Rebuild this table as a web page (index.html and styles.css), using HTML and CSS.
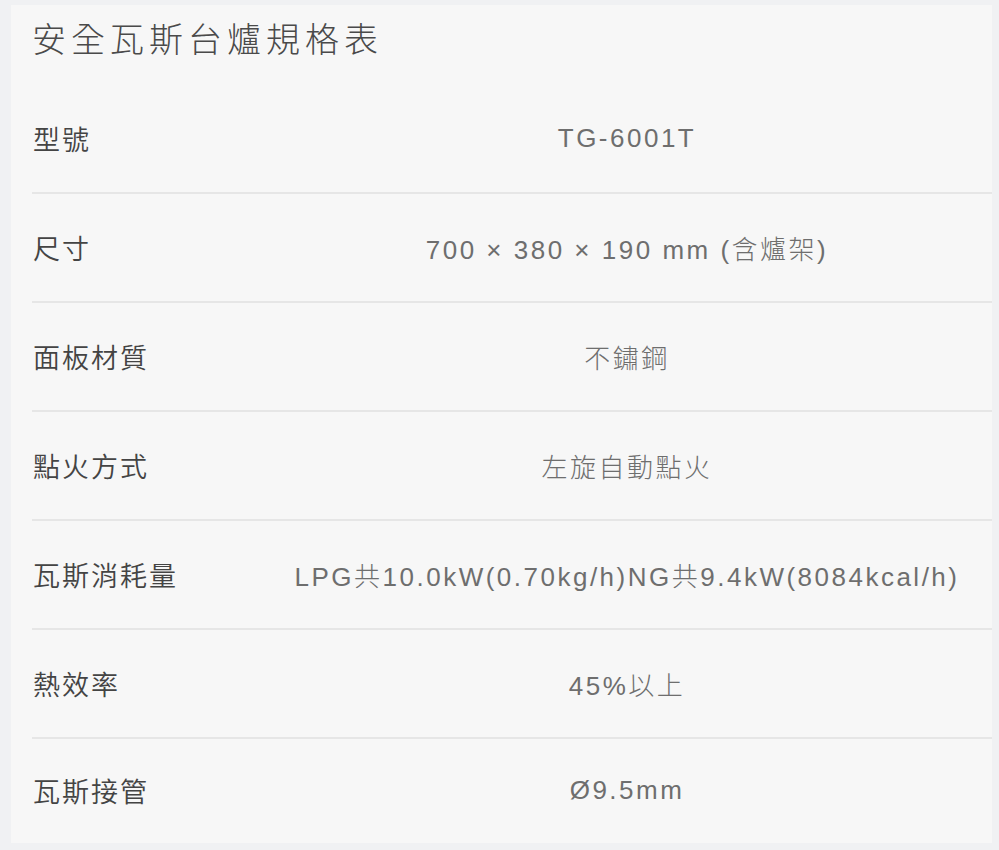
FILE: index.html
```html
<!DOCTYPE html>
<html lang="zh-Hant">
<head>
  <meta charset="UTF-8" />
  <meta name="viewport" content="width=device-width, initial-scale=1" />
  <title>安全瓦斯台爐規格表</title>
  <link rel="stylesheet" href="styles.css">
</head>
<body>
  <div class="spec-card">
    <h2 class="spec-title">安全瓦斯台爐規格表</h2>

    <!-- Tableau des specs -->
    <div class="spec-table">
      <div class="spec-row">
        <div class="spec-label">型號</div>
        <div class="spec-value">TG-6001T</div>
      </div>
      <div class="spec-row">
        <div class="spec-label">尺寸</div>
        <div class="spec-value">700 × 380 × 190 mm (含爐架)</div>
      </div>
      <div class="spec-row">
        <div class="spec-label">面板材質</div>
        <div class="spec-value">不鏽鋼</div>
      </div>
      <div class="spec-row">
        <div class="spec-label">點火方式</div>
        <div class="spec-value">左旋自動點火</div>
      </div>
      <div class="spec-row">
        <div class="spec-label">瓦斯消耗量</div>
        <div class="spec-value">LPG共10.0kW(0.70kg/h)NG共9.4kW(8084kcal/h)</div>
      </div>
      <div class="spec-row">
        <div class="spec-label">熱效率</div>
        <div class="spec-value">45%以上</div>
      </div>
      <div class="spec-row">
        <div class="spec-label">瓦斯接管</div>
        <div class="spec-value">Ø9.5mm</div>
      </div>
    </div>
  </div>
</body>
</html>
```

FILE: styles.css
```css
* {
  margin: 0;
  padding: 0;
  box-sizing: border-box;
  font-family: 'Liberation Sans', 'Noto Sans CJK TC', sans-serif;
}

body {
  background: #f0f1f3;
  padding: 5px 7px 7px 11px;
}

/* Carte principale */
.spec-card {
  background: #f7f7f7;
  padding-left: 21px;
  height: 838px;
}

.spec-title {
  font-size: 34px;
  font-weight: 300;
  line-height: 40px;
  letter-spacing: 5px;
  color: #4a4a4a;
  padding-top: 15px;
  padding-bottom: 25px;
}

/* Lignes du tableau */
.spec-row {
  display: grid;
  grid-template-columns: 230px 1fr;
  align-items: center;
  height: 109px;
  border-bottom: 2px solid #e6e6e6;
}

.spec-row:last-child {
  border-bottom: none;
  height: 103px;
}

.spec-label {
  font-size: 27px;
  font-weight: 350;
  letter-spacing: 2px;
  color: #444;
  padding-left: 1px;
}

.spec-value {
  font-size: 26px;
  font-weight: 300;
  letter-spacing: 2.5px;
  color: #6e6e6e;
  text-align: center;
  white-space: nowrap;
}
```
